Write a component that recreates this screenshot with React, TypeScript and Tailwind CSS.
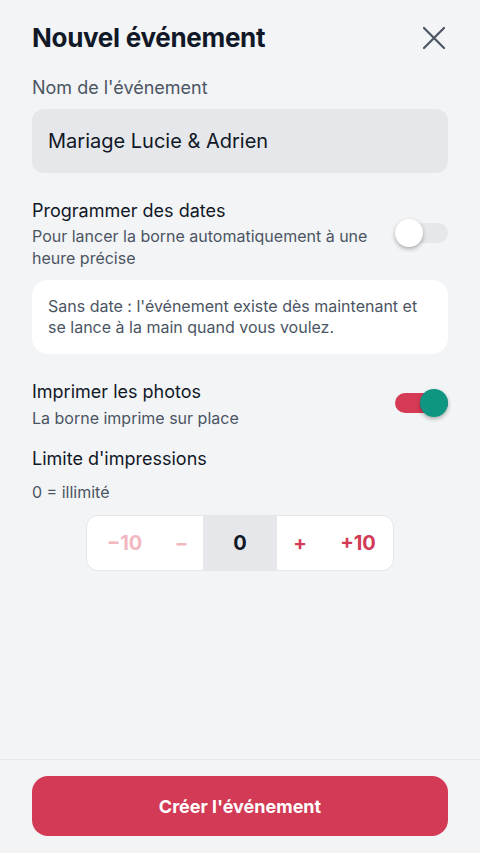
import React, { useState } from 'react';

const font = { fontFamily: 'Inter, "Noto Sans", sans-serif' };

interface SwitchProps {
  on: boolean;
  onToggle: () => void;
}

const Switch = ({ on, onToggle }: SwitchProps) => (
  <button
    type="button"
    onClick={onToggle}
    className={`relative h-[20px] w-[53px] shrink-0 rounded-full ${on ? 'bg-[#d63b56]' : 'bg-[#e5e7eb]'}`}
  >
    <span
      className={`absolute top-[-4px] h-[28px] w-[28px] rounded-full shadow-[0_2px_4px_rgba(0,0,0,0.3)] ${
        on ? 'right-0 bg-[#0e9682]' : 'left-0 bg-white'
      }`}
    />
  </button>
);

export default function App() {
  const [dates, setDates] = useState(false);
  const [print, setPrint] = useState(true);
  const [limit, setLimit] = useState(0);

  const step = (n: number) => setLimit((v) => Math.max(0, v + n));

  return (
    <div style={font} className="flex h-[853px] w-[480px] flex-col bg-[#f3f4f6] text-[#111827]">
      <div className="flex-1 px-8">
        <div className="flex items-center justify-between pt-[21px]">
          <h1 className="text-[26px] font-bold leading-[34px] tracking-[-0.3px]">Nouvel événement</h1>
          <button type="button" className="mr-[2px] text-[#4b5563]">
            <svg width="24" height="24" viewBox="0 0 24 24" fill="none" stroke="currentColor" strokeWidth="2.2" strokeLinecap="round">
              <path d="M2 2L22 22M22 2L2 22" />
            </svg>
          </button>
        </div>

        <p className="mt-[21px] text-[18px] leading-[24px] text-[#4b5563]">Nom de l'événement</p>
        <div className="mt-[9px] flex h-[64px] items-center rounded-xl bg-[#e5e7eb] px-4 text-[20px]">
          Mariage Lucie &amp; Adrien
        </div>

        <div className="mt-[25px] flex items-start justify-between gap-4">
          <div>
            <p className="text-[18px] leading-[26px]">Programmer des dates</p>
            <p className="mt-[1px] text-[16px] leading-[22px] text-[#4b5563]">
              Pour lancer la borne automatiquement à une heure précise
            </p>
          </div>
          <div className="mt-[25px]">
            <Switch on={dates} onToggle={() => setDates(!dates)} />
          </div>
        </div>

        <div className="mt-[11px] rounded-2xl bg-white px-4 py-[16px] text-[16px] leading-[21px] text-[#4b5563]">
          Sans date : l'événement existe dès maintenant et se lance à la main quand vous voulez.
        </div>

        <div className="mt-[25px] flex items-start justify-between gap-4">
          <div>
            <p className="text-[18px] leading-[26px]">Imprimer les photos</p>
            <p className="mt-[2px] text-[16px] leading-[22px] text-[#4b5563]">La borne imprime sur place</p>
          </div>
          <div className="mt-[14px]">
            <Switch on={print} onToggle={() => setPrint(!print)} />
          </div>
        </div>

        <p className="mt-[17px] text-[18px] leading-[26px]">Limite d'impressions</p>
        <p className="mt-[9px] text-[16px] leading-[22px] text-[#4b5563]">0 = illimité</p>

        <div className="mt-[12px] flex justify-center">
          <div className="flex h-[56px] overflow-hidden rounded-xl border border-[#e5e7eb] bg-white text-[20px] font-bold">
            <button type="button" onClick={() => step(-10)} className="w-[73px] pl-[2px] text-[#f2b8c2]">−10</button>
            <button type="button" onClick={() => step(-1)} className="w-[43px] text-[#f2b8c2]">−</button>
            <div className="flex w-[74px] items-center justify-center bg-[#e5e7eb] text-[#111827]">{limit}</div>
            <button type="button" onClick={() => step(1)} className="w-[46px] text-[#d33a55]">+</button>
            <button type="button" onClick={() => step(10)} className="w-[70px] text-[#d33a55]">+10</button>
          </div>
        </div>
      </div>

      <div className="border-t border-[#e5e7eb] px-8 pb-[17px] pt-[16px]">
        <button type="button" className="h-[60px] w-full rounded-2xl bg-[#d33a55] text-[18px] font-bold text-white">
          Créer l'événement
        </button>
      </div>
    </div>
  );
}
